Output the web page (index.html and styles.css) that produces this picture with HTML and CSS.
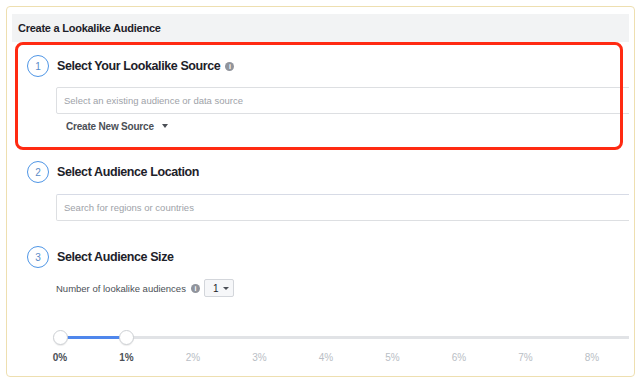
FILE: index.html
```html
<!DOCTYPE html>
<html lang="en">
<head>
    <meta charset="UTF-8">
    <meta name="viewport" content="width=device-width, initial-scale=1.0">
    <title>Create a Lookalike Audience</title>
    <link rel="stylesheet" href="styles.css">
</head>
<body>
    <div class="frame">
        <div class="content">
            <header class="panel-header">Create a Lookalike Audience</header>

            <section class="step step-source">
                <div class="step-head">
                    <span class="step-num">1</span>
                    <h2>Select Your Lookalike Source</h2>
                    <span class="info-icon">i</span>
                </div>
                <div class="step-body">
                    <input class="field" type="text" placeholder="Select an existing audience or data source">
                    <div class="create-source">Create New Source <span class="caret"></span></div>
                </div>
            </section>

            <section class="step step-location">
                <div class="step-head">
                    <span class="step-num">2</span>
                    <h2>Select Audience Location</h2>
                </div>
                <div class="step-body">
                    <input class="field" type="text" placeholder="Search for regions or countries">
                </div>
            </section>

            <section class="step step-size">
                <div class="step-head">
                    <span class="step-num">3</span>
                    <h2>Select Audience Size</h2>
                </div>
                <div class="step-body">
                    <div class="count-row">
                        <span>Number of lookalike audiences</span>
                        <span class="info-icon">i</span>
                        <div class="count-select">1 <span class="caret"></span></div>
                    </div>

                    <div class="slider">
                        <div class="track"></div>
                        <div class="track-fill"></div>
                        <span class="handle handle-start"></span>
                        <span class="handle handle-end"></span>
                    </div>
                    <div class="slider-labels">
                        <span class="on">0%</span>
                        <span class="on">1%</span>
                        <span>2%</span>
                        <span>3%</span>
                        <span>4%</span>
                        <span>5%</span>
                        <span>6%</span>
                        <span>7%</span>
                        <span>8%</span>
                    </div>
                </div>
            </section>
        </div>

        <!-- red highlight drawn over step 1 -->
        <div class="highlight"></div>
    </div>
</body>
</html>
```

FILE: styles.css
```css
body {
    margin: 0;
    background: #fff;
    font-family: 'Liberation Sans', Arial, sans-serif;
    color: #1d2129;
}

.frame {
    position: relative;
    box-sizing: border-box;
    width: 629px;
    height: 371px;
    margin: 6px 0 0 6px;
    padding: 7px 5px 0 5px;
    border: 1px solid #eedfb0;
    border-radius: 4px;
}

.content {
    height: 100%;
    overflow: hidden;
}

.panel-header {
    height: 28px;
    display: flex;
    align-items: center;
    padding: 0 6px;
    background-color: #f2f3f4;
    font-size: 11px;
    font-weight: 700;
    letter-spacing: -0.25px;
}

.step-source {
    padding-top: 13px;
}
.step-location {
    padding-top: 28px;
}
.step-size {
    padding-top: 25px;
}

.step-head {
    display: flex;
    align-items: center;
    height: 22px;
    padding-left: 15px;
}
.step-head h2 {
    margin: 0 0 0 8px;
    font-size: 12.5px;
    font-weight: 700;
    letter-spacing: -0.4px;
    color: #1d2129;
}

.step-num {
    box-sizing: border-box;
    width: 22px;
    height: 22px;
    border: 1.6px solid #4f96e6;
    border-radius: 50%;
    display: flex;
    align-items: center;
    justify-content: center;
    font-size: 10px;
    color: #5a8bc8;
}

.info-icon {
    width: 9px;
    height: 9px;
    border-radius: 50%;
    background-color: #90949c;
    color: #fff;
    font-size: 7px;
    font-weight: 700;
    line-height: 9px;
    text-align: center;
    margin-left: 5px;
    flex: none;
}

.step-body {
    padding-left: 44px;
}

.field {
    display: block;
    box-sizing: border-box;
    width: calc(100% + 10px);
    height: 27px;
    margin: 10px 0 0;
    padding: 0 7px;
    border: 1px solid #dddfe2;
    border-radius: 2px;
    font-family: inherit;
    font-size: 9.5px;
    outline: none;
}
.field::placeholder {
    color: #9ea2a8;
}
.step-location .field {
    margin-top: 11px;
    border-top-color: #d7dbe6;
}

.create-source {
    display: flex;
    align-items: center;
    height: 14px;
    margin-top: 5px;
    padding-left: 10px;
    font-size: 10px;
    font-weight: 700;
    letter-spacing: -0.2px;
    color: #4b4f56;
}

.caret {
    display: inline-block;
    width: 0;
    height: 0;
    margin-left: 8px;
    border-left: 3.5px solid transparent;
    border-right: 3.5px solid transparent;
    border-top: 4px solid #4b4f56;
}

.count-row {
    display: flex;
    align-items: center;
    height: 18px;
    margin-top: 11px;
    font-size: 9.5px;
    color: #4b4f56;
}

.count-select {
    box-sizing: border-box;
    display: flex;
    align-items: center;
    width: 30px;
    height: 18px;
    margin-left: 4px;
    padding-left: 8px;
    border: 1px solid #d3d6db;
    border-radius: 2px;
    background-color: #f6f7f9;
    font-size: 10px;
    color: #1d2129;
}
.count-select .caret {
    margin-left: 5px;
    border-left-width: 3px;
    border-right-width: 3px;
    border-top-width: 3.5px;
}

.slider {
    position: relative;
    height: 15px;
    margin: 33px 0 0 4px;
}
.track {
    position: absolute;
    left: 0;
    right: 0;
    top: 6px;
    height: 3px;
    background-color: #e1e3e6;
}
.track-fill {
    position: absolute;
    left: 0;
    top: 6px;
    width: 66px;
    height: 3px;
    background-color: #4f87ec;
}
.handle {
    position: absolute;
    top: 0;
    box-sizing: border-box;
    width: 15px;
    height: 15px;
    margin-left: -7.5px;
    border: 1px solid #cdd0d4;
    border-radius: 50%;
    background-color: #fff;
    box-shadow: 0 1px 1px rgba(0, 0, 0, 0.08);
}
.handle-start {
    left: 0;
}
.handle-end {
    left: 66px;
}

.slider-labels {
    display: flex;
    justify-content: space-between;
    width: 532px;
    height: 14px;
    margin: 5px 0 0 4px;
    font-size: 10px;
    color: #b9bec5;
}
.slider-labels span {
    width: 0;
    display: flex;
    justify-content: center;
    align-items: center;
    white-space: nowrap;
}
.slider-labels .on {
    font-weight: 700;
    color: #4b4f56;
}

.highlight {
    position: absolute;
    left: 8px;
    top: 35px;
    box-sizing: border-box;
    width: 608px;
    height: 108px;
    border: 3px solid #ff2a12;
    border-radius: 8px;
    pointer-events: none;
}
```
